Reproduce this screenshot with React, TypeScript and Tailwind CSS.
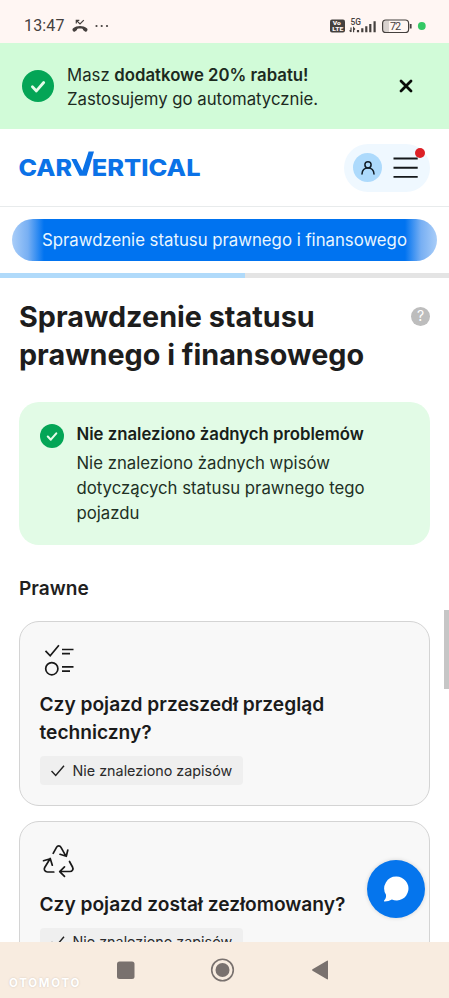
import type { ReactNode } from "react";

function CheckDisc({ className }: { className: string }) {
  return (
    <svg viewBox="0 0 32 32" className={className}>
      <circle cx="16" cy="16" r="16" fill="#04a556" />
      <path d="M10.4 16.8l4 4.1 7.3-8.4" fill="none" stroke="#e4fbe8" strokeWidth="2.8" strokeLinecap="round" strokeLinejoin="round" />
    </svg>
  );
}

function StatusBar() {
  return (
    <div className="flex h-[43px] shrink-0 items-center bg-[#fff6f3] pt-[9px] pr-[23px] pl-6 text-[#45403e]">
      <span className="w-[48px] font-[Roboto] text-[16px] leading-5 tracking-[0.15px] whitespace-nowrap">13:47</span>
      <svg viewBox="0 0 16 14" className="h-[14px] w-4">
        <path d="M1 11.9C.2 11 .3 9.900 1.200 9.200 5 6.400 11 6.400 14.800 9.200c.9.7 1 1.800.2 2.700l-.5.5c-.4.4-1 .4-1.500 0l-1.700-1.200c-.4-.3-.5-.7-.4-1.300-1.800-.6-4-.6-5.800 0 .1.6 0 1-.4 1.300L3 12.400c-.5.4-1.100.4-1.500 0z" fill="currentColor" />
        <path d="M4.300 4.400V1.300h3M4.600 1.600L8 4.900l3.800-3.800" fill="none" stroke="currentColor" strokeWidth="1.200" />
      </svg>
      <svg viewBox="0 0 14 4" className="mb-px ml-[7px] h-1 w-[14px] fill-current">
        <circle cx="1.500" cy="2" r="1.100" />
        <circle cx="6.700" cy="2" r="1.100" />
        <circle cx="12" cy="2" r="1.100" />
      </svg>
      <svg viewBox="0 0 96 16" className="ml-auto h-4 w-24 overflow-visible" fontFamily="Roboto, sans-serif">
        <rect x="0" y="1.500" width="15" height="13" rx="2" fill="#45403e" />
        <text x="2.700" y="7.300" fontSize="5.800" fontWeight="900" fill="#fff6f3" textLength="8" lengthAdjust="spacingAndGlyphs">Vo</text>
        <text x="2.300" y="13.300" fontSize="5.800" fontWeight="900" fill="#fff6f3" textLength="11" lengthAdjust="spacingAndGlyphs">LTE</text>
        <text x="20.500" y="6.600" fontSize="9" fontWeight="500" fill="#45403e" textLength="10.500" lengthAdjust="spacingAndGlyphs">5G</text>
        <path d="M21 9.500v4.500M19.600 12.300l1.400 1.600M23.600 14.300V9.900l1.400 1.600" stroke="#45403e" strokeWidth="1.200" fill="none" />
        <path d="M28 14.300v-2.300M32.300 14.300v-4M36.300 14.300V8.300M40.300 14.300V6M44.600 14.300V3.300" stroke="#45403e" strokeWidth="2.200" />
        <path d="M59 2.500h-3.500a2.500 2.500 0 0 0-2.500 2.500v6.500a2.500 2.500 0 0 0 2.500 2.500H59z" fill="#d9d2cf" />
        <rect x="52.600" y="2" width="26" height="12.500" rx="3.300" fill="none" stroke="#45403e" strokeWidth="1.200" />
        <path d="M80.700 6v4.500" stroke="#45403e" strokeWidth="1.800" />
        <text x="60" y="12.200" fontSize="10.800" fill="#45403e" textLength="11">72</text>
        <circle cx="91.800" cy="8" r="3.900" fill="#33c864" />
      </svg>
    </div>
  );
}

function Chip() {
  return (
    <div className="mt-[9.500px] flex h-[29px] w-[203px] items-center rounded-[4px] bg-[#efefef] pl-[11.500px] text-[#2a2a2a]">
      <svg viewBox="0 0 14 12" className="h-3 w-[14px]">
        <path d="M.5 6l4.200 4.500L13 .7" fill="none" stroke="#202020" strokeWidth="1.400" />
      </svg>
      <span className="ml-[7.500px] text-[14.350px] leading-5 whitespace-nowrap">Nie znaleziono zapisów</span>
    </div>
  );
}

function Card({ icon, children }: { icon: ReactNode; children: ReactNode }) {
  return (
    <section className="shrink-0 rounded-[20px] border border-[#d4d4d4] bg-[#f8f8f8] pt-[19px] pr-5 pb-5 pl-[19.500px]">
      {icon}
      <h3 className="mt-[10.500px] text-[19.150px] leading-[28.500px] font-semibold whitespace-nowrap text-[#1b1b1b]">{children}</h3>
      <Chip />
    </section>
  );
}

export default function App() {
  return (
    <div className="relative flex h-[998px] w-[449px] flex-col overflow-hidden bg-white font-[Inter,sans-serif] text-[#1f1f1f]">
      <StatusBar />

      <div className="flex h-[86px] shrink-0 items-center bg-[#d1fbd8] pr-[36px] pl-[22px] text-[#1c2a1e]">
        <CheckDisc className="h-8 w-8" />
        <p className="ml-[13px] pt-px text-[16.750px] leading-6 whitespace-nowrap">
          Masz <b className="font-semibold">dodatkowe 20% rabatu!</b>
          <br />
          Zastosujemy go automatycznie.
        </p>
        <svg viewBox="0 0 14 14" className="ml-auto h-[14px] w-[14px]">
          <path d="M2 2l10 10M12 2L2 12" stroke="#080b08" strokeWidth="2.800" strokeLinecap="round" />
        </svg>
      </div>

      <header className="flex h-[78px] shrink-0 items-center justify-between border-b border-[#e8ebec] pr-[19px] pl-[18px]">
        <svg viewBox="0 0 184 30" className="h-[30px] w-[184px] overflow-visible" fontFamily="Inter, sans-serif" fontSize="23" fontWeight="800" fill="#0b72e7">
          <text x="0.500" y="22.700" textLength="53.500" lengthAdjust="spacingAndGlyphs">CAR</text>
          <path d="M53.300 6h5l6 11.800L70.600-1.600h5.400L68.700 22.700h-7.200z" />
          <text x="73.800" y="22.700" textLength="108.700" lengthAdjust="spacingAndGlyphs">ERTICAL</text>
        </svg>
        <div className="relative flex h-12 w-[86px] items-center rounded-full bg-[#eff8ff] pl-[9px]">
          <div className="flex h-[29px] w-[29px] items-center justify-center rounded-full bg-[#addafc]">
            <svg viewBox="0 0 16 16" className="h-4 w-4" fill="none" stroke="#111d27" strokeWidth="1.500" strokeLinecap="round">
              <circle cx="8" cy="4.800" r="3.100" />
              <path d="M2 14c.2-3.700 2.700-6 6-6s5.800 2.300 6 6" />
            </svg>
          </div>
          <svg viewBox="0 0 25 22" className="ml-[11px] h-[22px] w-[25px]">
            <path d="M.5 1.500h24.200M.5 10.700h24.200M.5 19.900h24.200" stroke="#15181b" strokeWidth="1.900" />
          </svg>
          <span className="absolute top-[4px] right-[5px] h-[10px] w-[10px] rounded-full bg-[#dc2026]" />
        </div>
      </header>

      <div className="flex h-[66px] shrink-0 items-center justify-center pb-px">
        <div className="flex h-[42px] w-[425px] items-center justify-center rounded-full bg-[linear-gradient(90deg,#a9cdf8_0px,#77aff3_16px,#0073f0_32px,#0073f0_393px,#77aff3_409px,#a9cdf8_425px)] pt-[2px] text-[16.750px] whitespace-nowrap text-[#e9f6ff]">
          Sprawdzenie statusu prawnego i finansowego
        </div>
      </div>
      <div className="h-[5px] shrink-0 bg-[#e4e4e4]">
        <div className="h-full w-[245px] bg-[#b0dafa]" />
      </div>

      <main className="flex min-h-0 flex-1 flex-col overflow-hidden px-[19px]">
        <div className="mt-[20px] flex shrink-0 items-start justify-between">
          <h1 className="text-[28.750px] leading-[38px] font-bold whitespace-nowrap text-[#1d1d1d]">
            Sprawdzenie statusu
            <br />
            prawnego i finansowego
          </h1>
          <span className="mt-[8.500px] flex h-[19px] w-[19px] items-center justify-center rounded-full bg-[#bdbdbd] text-[14px] leading-none text-white">?</span>
        </div>

        <section className="mt-[28px] flex h-[143px] shrink-0 items-start rounded-[20px] bg-[#e2fbe6] pt-[19px] pl-[21px] text-[#213024]">
          <CheckDisc className="mt-[2.500px] h-6 w-6" />
          <div className="ml-[12.500px] whitespace-nowrap">
            <h2 className="text-[16.750px] leading-[27px] font-semibold text-[#172019]">Nie znaleziono żadnych problemów</h2>
            <p className="mt-[3px] text-[16.750px] leading-[25px]">
              Nie znaleziono żadnych wpisów
              <br />
              dotyczących statusu prawnego tego
              <br />
              pojazdu
            </p>
          </div>
        </section>

        <h2 className="mt-[27.500px] shrink-0 text-[19.100px] leading-[30px] font-semibold">Prawne</h2>

        <div className="mt-[18.500px] flex shrink-0 flex-col gap-[15px]">
          <Card
            icon={
              <svg viewBox="0 0 38 38" className="h-[38px] w-[38px]" fill="none" stroke="#191919" strokeWidth="1.700">
                <path d="M5.500 9.800l4.700 5L18.900 4.200" />
                <circle cx="11.800" cy="27.700" r="6.100" />
                <path d="M22 8.500H33.500M22 12.700h8M22 25.900H33.500M22 30.100h8" />
              </svg>
            }
          >
            Czy pojazd przeszedł przegląd
            <br />
            techniczny?
          </Card>
          <Card
            icon={
              <svg viewBox="0 0 38 38" className="h-[38px] w-[38px]" fill="none" stroke="#191919" strokeWidth="1.700" strokeLinejoin="round" strokeLinecap="round">
                <path d="M13.200 12.300l3.300-6c1-1.800 3.500-1.800 4.500 0l4.500 8M20 13.300l6.300 2 1.500-6.300" />
                <path d="M13.800 31H7.500c-2.500 0-4-2.300-2.800-4.500l5.500-9M3.500 19.700l6.800-2 2 6.500" />
                <path d="M29.500 20.500l3 5.500c1.200 2.200-.2 4.500-2.600 4.500h-10M24.500 25.800l-4.800 4.800 4.800 4.800" />
              </svg>
            }
          >
            Czy pojazd został zezłomowany?
          </Card>
        </div>
      </main>

      <nav className="relative flex h-14 shrink-0 items-center bg-[#f8ece0]">
        <svg viewBox="0 0 449 56" className="h-14 w-[449px]" fill="#79716e">
          <rect x="117" y="19.500" width="17.500" height="17.500" rx="2.500" />
          <circle cx="222.500" cy="28" r="10.800" fill="none" stroke="#79716e" strokeWidth="1.600" />
          <circle cx="222.500" cy="28" r="7" />
          <path d="M312.500 27.300l14.500-8.600q1-.5 1 .6v17.400q0 1.100-1 .6l-14.500-8.600q-1-.7 0-1.400z" />
        </svg>
        <span className="absolute top-[35px] left-[9px] text-[11.500px] leading-[13px] font-bold tracking-[1.700px] text-white [text-shadow:0_0_2px_#cfc4ba]">OTOMOTO</span>
      </nav>

      <div className="absolute top-[610px] right-0 h-[79px] w-[5px] bg-[#c6c6c6]" />
      <button className="absolute top-[860px] left-[367px] flex h-[58px] w-[58px] items-center justify-center rounded-full bg-[#0575ed] shadow-[0_0_4px_rgba(0,0,0,0.15)]">
        <svg viewBox="0 0 26 26" className="h-[26px] w-[26px]" fill="#fff">
          <path d="M13.500.5a12 12 0 1 1-4.600 23.100c-2.200 1.300-4.600 2-7.200 2-.7 0-.9-.8-.4-1.300 1.600-1.800 2-3.600 1.600-5.700A12 12 0 0 1 13.500.5z" />
        </svg>
      </button>
    </div>
  );
}
